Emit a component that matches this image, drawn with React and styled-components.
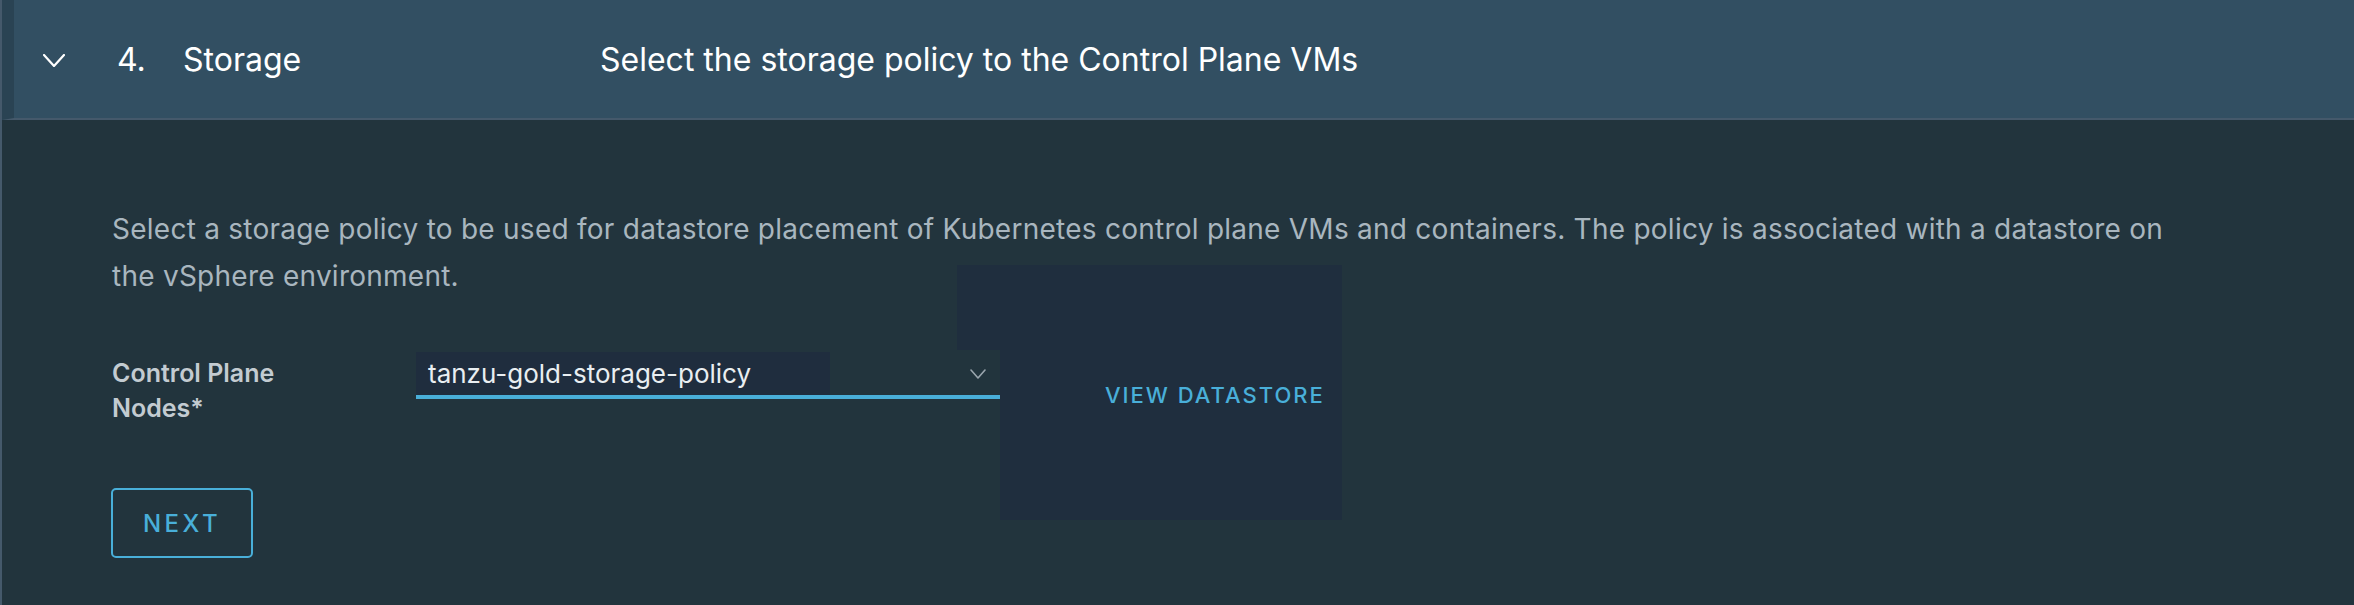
import React from 'react';
import styled, { createGlobalStyle } from 'styled-components';

const GlobalStyle = createGlobalStyle`
  html, body {
    margin: 0;
    padding: 0;
    background-color: #22343d;
  }

  body {
    font-family: Inter, 'Noto Sans', 'Liberation Sans', sans-serif;
    -webkit-font-smoothing: antialiased;
  }
`;

function ChevronDown({ width, height, color, stroke }) {
  return (
    <svg width={width} height={height} viewBox={`0 0 ${width} ${height}`} fill="none">
      <polyline
        points={`1,1 ${width / 2},${height - 1} ${width - 1},1`}
        stroke={color}
        strokeWidth={stroke}
        strokeLinecap="round"
        strokeLinejoin="round"
      />
    </svg>
  );
}

function App() {
  return (
    <>
      <GlobalStyle />
      <Page>
        <StepHeader>
          <ToggleIcon>
            <ChevronDown width={22} height={13} color="#ffffff" stroke={2.2} />
          </ToggleIcon>
          <StepNumber>4.</StepNumber>
          <StepName>Storage</StepName>
          <StepTitle>Select the storage policy to the Control Plane VMs</StepTitle>
        </StepHeader>

        <StepBody>
          <Description>
            Select a storage policy to be used for datastore placement of Kubernetes control plane VMs and
            containers. The policy is associated with a datastore on the vSphere environment.
          </Description>

          <FormRow>
            <FieldLabel>
              Control Plane
              <br />
              Nodes*
            </FieldLabel>
            <SelectBox>
              <SelectValue>tanzu-gold-storage-policy</SelectValue>
              <SelectCaret>
                <ChevronDown width={16} height={10} color="#9aa5ad" stroke={1.6} />
              </SelectCaret>
            </SelectBox>
            <LinkButton type="button">VIEW DATASTORE</LinkButton>
          </FormRow>

          <NextButton type="button">NEXT</NextButton>
        </StepBody>

        <DatastorePanel />
      </Page>
    </>
  );
}

const Page = styled.div`
  position: relative;
  width: 2354px;
  height: 605px;
  box-sizing: border-box;
  border-left: 2px solid #45596b;
  background-color: #22343d;
  overflow: hidden;
`;

const StepHeader = styled.div`
  display: flex;
  align-items: center;
  height: 118px;
  padding-left: 29px;
  background-color: #324f62;
  border-left: 12px solid #2a4353;
  border-bottom: 2px solid #45596b;
  color: #ffffff;
  font-size: 32px;
  font-weight: 400;
`;

const ToggleIcon = styled.span`
  display: flex;
  align-items: center;
  width: 22px;
  margin-right: 52px;
  margin-top: 2px;
`;

const StepNumber = styled.span`
  width: 66px;
`;

const StepName = styled.span`
  width: 417px;
`;

const StepTitle = styled.span`
  letter-spacing: 0;
`;

const StepBody = styled.div`
  padding: 86px 0 0 110px;
`;

const Description = styled.p`
  margin: 0;
  width: 2080px;
  font-size: 28px;
  line-height: 47px;
  letter-spacing: 0.25px;
  color: #a9b6bf;
`;

const FormRow = styled.div`
  display: flex;
  align-items: flex-start;
  margin-top: 52px;
`;

const FieldLabel = styled.div`
  width: 304px;
  margin-top: 4px;
  font-size: 25px;
  font-weight: 600;
  line-height: 35px;
  color: #c3cbd1;
`;

const SelectBox = styled.div`
  position: relative;
  z-index: 1;
  display: flex;
  align-items: center;
  justify-content: space-between;
  width: 584px;
  height: 43px;
  background-color: #22343d;
  border-bottom: 4px solid #49afd9;
`;

const SelectValue = styled.span`
  width: 402px;
  height: 43px;
  padding-left: 12px;
  background-color: #1f2d3e;
  font-size: 26px;
  line-height: 43px;
  color: #e9eef1;
`;

const SelectCaret = styled.span`
  display: flex;
  margin-right: 14px;
`;

const LinkButton = styled.button`
  position: relative;
  z-index: 1;
  margin: 32px 0 0 105px;
  padding: 0;
  border: none;
  background: none;
  font-family: inherit;
  font-size: 22px;
  font-weight: 500;
  line-height: 22px;
  letter-spacing: 2px;
  color: #49afd9;
`;

const NextButton = styled.button`
  display: block;
  width: 142px;
  height: 70px;
  margin-top: 62px;
  margin-left: -1px;
  padding: 0;
  border: 2px solid #49afd9;
  border-radius: 5px;
  background: none;
  font-family: inherit;
  font-size: 24px;
  font-weight: 500;
  letter-spacing: 3.5px;
  color: #49afd9;
`;

const DatastorePanel = styled.div`
  position: absolute;
  left: 955px;
  top: 265px;
  width: 385px;
  height: 255px;
  background-color: #1f2e3e;
  clip-path: polygon(0 0, 100% 0, 100% 100%, 43px 100%, 43px 85px, 0 85px);
`;

export default App;
